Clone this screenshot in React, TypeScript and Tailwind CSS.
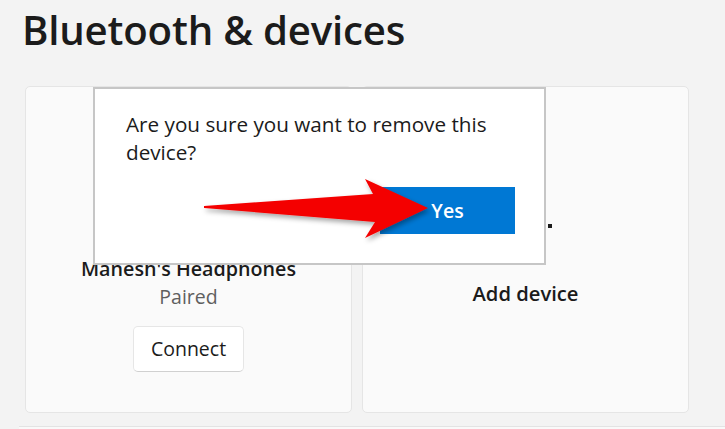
export default function App() {
  return (
    <div
      className="relative h-[429px] w-[725px] overflow-hidden bg-[#f3f3f3] text-[#1b1b1b]"
      style={{ fontFamily: '"Open Sans", "Noto Sans", sans-serif' }}
    >
      {/* Page title */}
      <h1 className="pl-[22px] pt-[4px] text-[40.2px] font-semibold leading-[52px] tracking-[-0.2px]">
        Bluetooth &amp; devices
      </h1>

      {/* Device cards */}
      <div className="mt-[30px] flex gap-[10px] pl-[25px]">
        <div className="flex h-[327px] w-[327px] flex-col items-center justify-end rounded-[5px] border border-[#e5e5e5] bg-[#fafafa] pb-[40px]">
          <div className="text-[19.7px] font-semibold leading-[28px]">Manesh's Headphones</div>
          <div className="text-[19.5px] leading-[28px] text-[#5f5f5f]">Paired</div>
          <button className="mt-[15px] h-[46px] w-[111px] rounded-[5px] border border-[#e6e6e6] border-b-[#d0d0d0] bg-white text-[19.5px]">
            Connect
          </button>
        </div>

        <div className="relative flex h-[327px] w-[327px] flex-col items-center justify-center rounded-[5px] border border-[#e5e5e5] bg-[#fafafa]">
          <div className="absolute left-[185px] top-[137px] h-[4px] w-[4px] bg-[#1b1b1b]" />
          <div className="mt-[86px] text-[20.2px] font-semibold leading-[26px]">Add device</div>
        </div>
      </div>

      {/* Next card peeking at the bottom */}
      <div className="ml-[19px] mt-[13px] h-[20px] border-t border-[#e3e3e3] bg-[#f9f9f9]" />

      {/* Confirmation dialog */}
      <div className="absolute left-[93px] top-[87px] flex h-[178px] w-[453px] flex-col border-2 border-[#c6c6c6] bg-white pl-[31px] pr-[20px] pt-[21px]">
        <p className="text-[20.7px] leading-[28px] text-[#1b1b1b]">
          Are you sure you want to remove this device?
        </p>
        <div className="mt-auto mb-[29px] mr-[9px] flex justify-end">
          <button className="h-[47px] w-[135px] bg-[#0078d4] text-[19.5px] font-semibold text-white">
            Yes
          </button>
        </div>
      </div>

      {/* Red pointer arrow */}
      <svg className="absolute left-0 top-0" width="725" height="429" viewBox="0 0 725 429">
        <defs>
          <filter id="sh" x="-10%" y="-30%" width="130%" height="170%">
            <feDropShadow dx="2" dy="3" stdDeviation="2.5" floodColor="#000" floodOpacity="0.35" />
          </filter>
        </defs>
        <polygon
          points="204,206 373,194 365,179 428,208 365,238 375,222 204,208"
          fill="#f40000"
          filter="url(#sh)"
        />
      </svg>
    </div>
  );
}
